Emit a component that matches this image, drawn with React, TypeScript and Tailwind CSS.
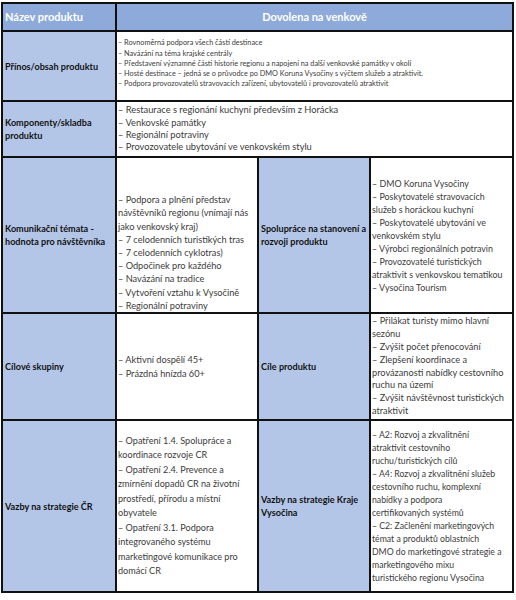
import React from 'react';

type Cell = { lines: string[]; size: string; lh: string };

function Lines({ cell }: { cell: Cell }) {
  return (
    <div className={`${cell.size} ${cell.lh} text-[#3b3b3b]`}>
      {cell.lines.map((l, i) => (
        <div key={i} className="whitespace-nowrap">
          {l}
        </div>
      ))}
    </div>
  );
}

function Label({ lines }: { lines: string[] }) {
  return (
    <div className="text-[9.1px] leading-[13px] font-bold text-[#111]">
      {lines.map((l, i) => (
        <div key={i} className="whitespace-nowrap">
          {l}
        </div>
      ))}
    </div>
  );
}

const prinos: Cell = {
  size: 'text-[7.3px]',
  lh: 'leading-[10.2px]',
  lines: [
    '– Rovnoměrná podpora všech částí destinace',
    '– Navázání na téma krajské centrály',
    '– Představení významné části historie regionu a napojení na další venkovské památky v okolí',
    '– Hosté destinace – jedná se o průvodce po DMO Koruna Vysočiny s výčtem služeb a atraktivit.',
    '– Podpora provozovatelů stravovacích zařízení, ubytovatelů i provozovatelů atraktivit',
  ],
};

const komponenty: Cell = {
  size: 'text-[9.3px]',
  lh: 'leading-[12.3px]',
  lines: [
    '– Restaurace s regionání kuchyní především z Horácka',
    '– Venkovské památky',
    '– Regionální potraviny',
    '– Provozovatele ubytování ve venkovském stylu',
  ],
};

const temata: Cell = {
  size: 'text-[9.2px]',
  lh: 'leading-[13.2px]',
  lines: [
    '– Podpora a plnění představ',
    'návštěvníků regionu (vnímají nás',
    'jako venkovský kraj)',
    '– 7 celodenních turistikých tras',
    '– 7 celodenních cyklotras)',
    '– Odpočinek pro každého',
    '– Navázání na tradice',
    '– Vytvoření vztahu k Vysočině',
    '– Regionální potraviny',
  ],
};

const spoluprace: Cell = {
  size: 'text-[8.9px]',
  lh: 'leading-[13px]',
  lines: [
    '– DMO Koruna Vysočiny',
    '– Poskytovatelé stravovacích',
    'služeb s horáckou kuchyní',
    '– Poskytovatelé ubytování ve',
    'venkovském stylu',
    '– Výrobci regionálních potravin',
    '– Provozovatelé turistických',
    'atraktivit s venkovskou tematikou',
    '– Vysočina Tourism',
  ],
};

const skupiny: Cell = {
  size: 'text-[9.2px]',
  lh: 'leading-[14px]',
  lines: ['– Aktivní dospělí 45+', '– Prázdná hnízda 60+'],
};

const cile: Cell = {
  size: 'text-[9.2px]',
  lh: 'leading-[12.9px]',
  lines: [
    '– Přilákat turisty mimo hlavní',
    'sezónu',
    '– Zvýšit počet přenocování',
    '– Zlepšení koordinace a',
    'provázanosti nabídky cestovního',
    'ruchu na území',
    '– Zvýšit návštěvnost turistických',
    'atraktivit',
  ],
};

const vazbyCR: Cell = {
  size: 'text-[9.1px]',
  lh: 'leading-[14.5px]',
  lines: [
    '– Opatření 1.4. Spolupráce a',
    'koordinace rozvoje CR',
    '– Opatření 2.4. Prevence a',
    'zmírnění dopadů CR na životní',
    'prostředí, přírodu a místní',
    'obyvatele',
    '– Opatření 3.1. Podpora',
    'integrovaného systému',
    'marketingové komunikace pro',
    'domácí CR',
  ],
};

const vazbyKraj: Cell = {
  size: 'text-[8.7px]',
  lh: 'leading-[13px]',
  lines: [
    '– A2: Rozvoj a zkvalitnění',
    'atraktivit cestovního',
    'ruchu/turistických cílů',
    '– A4: Rozvoj a zkvalitnění služeb',
    'cestovního ruchu, komplexní',
    'nabídky a podpora',
    'certifikovaných systémů',
    '– C2: Začlenění marketingových',
    'témat a produktů oblastních',
    'DMO do marketingové strategie a',
    'marketingového mixu',
    'turistického regionu Vysočina',
  ],
};

export default function App() {
  const labelCell = 'bg-[#b4c6e7] border-2 border-[#111] pl-[2px] align-middle';
  const textCell = 'bg-white border-2 border-[#111] pl-[1px] overflow-hidden';

  return (
    <div className="w-[516px] h-[600px] bg-white pt-[2px] pl-[1px] font-['Lato','Noto_Sans',sans-serif]">
      <table className="table-fixed border-collapse border-2 border-[#111] w-[511px]">
        <colgroup>
          <col className="w-[114px]" />
          <col className="w-[142px]" />
          <col className="w-[112px]" />
          <col className="w-[143px]" />
        </colgroup>
        <tbody>
          <tr className="h-[28px] bg-[#8eaadb]">
            <td className="border-2 border-[#111] pl-[2px] text-white font-bold text-[11px] whitespace-nowrap">
              Název produktu
            </td>
            <td colSpan={3} className="border-2 border-[#111] text-center text-white font-bold text-[11px]">
              Dovolena na venkově
            </td>
          </tr>
          <tr className="h-[70px]">
            <td className={labelCell}>
              <Label lines={['Přínos/obsah produktu']} />
            </td>
            <td colSpan={3} className={`${textCell} align-middle pb-[4px]`}>
              <Lines cell={prinos} />
            </td>
          </tr>
          <tr className="h-[56px]">
            <td className={labelCell}>
              <Label lines={['Komponenty/skladba', 'produktu']} />
            </td>
            <td colSpan={3} className={`${textCell} align-middle`}>
              <Lines cell={komponenty} />
            </td>
          </tr>
          <tr className="h-[156px]">
            <td className={labelCell}>
              <Label lines={['Komunikační témata -', 'hodnota pro návštěvníka']} />
            </td>
            <td className={`${textCell} align-bottom`}>
              <Lines cell={temata} />
            </td>
            <td className={labelCell}>
              <Label lines={['Spolupráce na stanovení a', 'rozvoji produktu']} />
            </td>
            <td className={`${textCell} align-middle`}>
              <Lines cell={spoluprace} />
            </td>
          </tr>
          <tr className="h-[107px]">
            <td className={labelCell}>
              <Label lines={['Cílové skupiny']} />
            </td>
            <td className={`${textCell} align-middle`}>
              <Lines cell={skupiny} />
            </td>
            <td className={labelCell}>
              <Label lines={['Cíle produktu']} />
            </td>
            <td className={`${textCell} align-middle`}>
              <Lines cell={cile} />
            </td>
          </tr>
          <tr className="h-[172px]">
            <td className={labelCell}>
              <Label lines={['Vazby na strategie ČR']} />
            </td>
            <td className={`${textCell} align-middle`}>
              <Lines cell={vazbyCR} />
            </td>
            <td className={labelCell}>
              <Label lines={['Vazby na strategie Kraje', 'Vysočina']} />
            </td>
            <td className={`${textCell} align-middle`}>
              <Lines cell={vazbyKraj} />
            </td>
          </tr>
        </tbody>
      </table>
    </div>
  );
}
